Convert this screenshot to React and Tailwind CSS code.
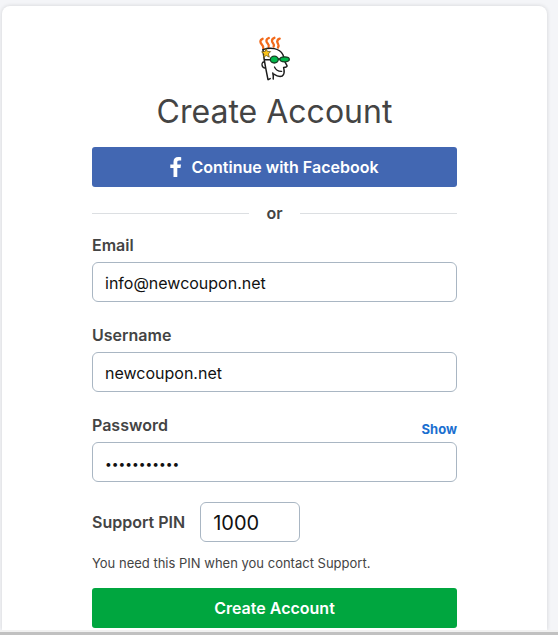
import { useState } from "react";

const inputStyle =
  "h-10 rounded-[6px] border border-[#a9b6c3] bg-white px-3 pt-[2px] text-[#111] outline-none";
const labelStyle = "text-base leading-6 font-semibold text-[#444]";

function Logo() {
  return (
    <svg className="mx-auto block" width="36" height="46" viewBox="0 0 36 46" fill="none" strokeLinecap="round" strokeLinejoin="round" aria-label="GoDaddy" role="img">
      <g stroke="#f26a1b" strokeWidth="2.3">
        <path d="M6.200 12c.8-2.800-2.800-3.600-2.800-6.200 0-1.600 1-2.600 2.200-3" />
        <path d="M11.600 11c1.400-2.600-2.200-3.600-2.200-6 0-1.600 1.200-2.600 2.400-3" />
        <path d="M16.600 10.600c1.600-2.600-1.800-3.400-1.600-5.800 0-1.600 1.200-2.600 2.400-3" />
        <path d="M21 11.500c2-2.800-1-3.800-.7-6 .1-1.600 1.200-2.600 2.400-2.900" />
      </g>
      <path d="M6 13.600C13 11 22.500 12 25.800 18.500c.4.800.6 1.400.7 2.200M28 26l2 3.600c.4 1.200-.8 1.700-3.400 1.800.8 3.500 1 7.300-1.400 8.600-2.800 1.100-6.400-.6-8.400-1.900" stroke="#1b1b1b" strokeWidth="1.500" />
      <path d="M6 13.800c.6 9 3 20 5 29.800M11.200 43.600l2-1M15.800 37c.6 2.300.8 4 .4 6" stroke="#1b1b1b" strokeWidth="1.500" />
      <path d="M6.800 26c-2.700.2-2.400 5.500.9 6M17.500 31c1.200 2.800 4 4.400 7.200 4.300" stroke="#1b1b1b" strokeWidth="1.300" />
      <path d="M8 23.700h5M20.500 23h2.500" stroke="#1b1b1b" strokeWidth="1.500" />
      <ellipse cx="17.300" cy="23.600" rx="4" ry="3.400" fill="#00b84a" stroke="#173d22" strokeWidth="1.300" />
      <ellipse cx="27.600" cy="23.300" rx="4.700" ry="2.500" fill="#00b84a" stroke="#173d22" strokeWidth="1.300" />
      <path d="M9 12.500l1.400 2.900 3.200.2-2.200 2.300.9 3.300-3-1.700-2.900 1.900.6-3.300-2.400-2.200 3.200-.4z" fill="#fcc419" stroke="#5b4a16" strokeWidth=".7" />
    </svg>
  );
}

function Field({ id, label, action, masked, ...rest }) {
  return (
    <div className="mb-5">
      <div className="mb-1 flex h-[26px] items-center justify-between">
        <label htmlFor={id} className={labelStyle}>{label}</label>
        {action}
      </div>
      <input id={id} className={`${inputStyle} block w-full ${masked ? "text-xs" : "text-base"}`} {...rest} />
    </div>
  );
}

export default function App() {
  const [shown, setShown] = useState(false);
  return (
    <div className="flex min-h-screen flex-col bg-[#f4f5f8] font-['Inter',sans-serif]">
      <main className="flex flex-1 flex-col pt-[6px] pr-[11px] pl-[2px]">
        <form className="flex-1 rounded-t-[8px] bg-white px-[90px] pt-[30px] pb-[2px] shadow-[0_0_4px_rgba(0,0,0,0.14)]" onSubmit={(e) => e.preventDefault()}>
          <Logo />
          <h1 className="mt-[10px] text-center text-[32px] leading-10 whitespace-nowrap text-[#444]">Create Account</h1>
          <button type="button" className="mt-[15px] flex h-10 w-full items-center justify-center rounded-[3px] bg-[#4267b2] text-base font-semibold text-white">
            <svg className="mr-[9px]" width="12" height="20" viewBox="0 0 12 20" fill="#fff" aria-hidden="true">
              <path d="M3.500 20v-9H.3V7.400h3.200V4.800C3.500 1.700 5.300.1 8.200.1c1.300 0 2.400.1 3 .2v3.300H9.100c-1.500 0-1.800.7-1.800 1.800v2h3.700l-.5 3.600H7.300v9z" />
            </svg>
            Continue with Facebook
          </button>
          <div className="mt-[13px] mb-[6px] flex items-center gap-[17px] text-base leading-[26px] font-semibold text-[#444]">
            <span className="h-px flex-1 bg-[#dcdfe2]" />
            or
            <span className="h-px flex-1 bg-[#dcdfe2]" />
          </div>
          <Field id="email" label="Email" type="email" defaultValue="info@newcoupon.net" />
          <Field id="username" label="Username" type="text" defaultValue="newcoupon.net" />
          <Field
            id="password"
            label="Password"
            masked={!shown}
            type={shown ? "text" : "password"}
            defaultValue="newcoupon12"
            action={
              <button type="button" className="self-end text-[13px] leading-[18px] font-bold text-[#1b6fd0]" onClick={() => setShown(!shown)}>
                {shown ? "Hide" : "Show"}
              </button>
            }
          />
          <div className="flex items-center gap-[15px]">
            <label htmlFor="pin" className={labelStyle}>Support PIN</label>
            <input id="pin" className={`${inputStyle} w-[100px] text-xl`} type="text" inputMode="numeric" defaultValue="1000" />
          </div>
          <p className="mt-[11px] text-[13px] leading-5 text-[#444]">You need this PIN when you contact Support.</p>
          <button type="submit" className="mt-[15px] h-10 w-full rounded-[3px] bg-[#00a63f] text-base font-semibold text-white">
            Create Account
          </button>
        </form>
      </main>
      <div className="h-[5px] border-t-2 border-[#f1f1f1] bg-[#c1c1c1]" />
    </div>
  );
}
